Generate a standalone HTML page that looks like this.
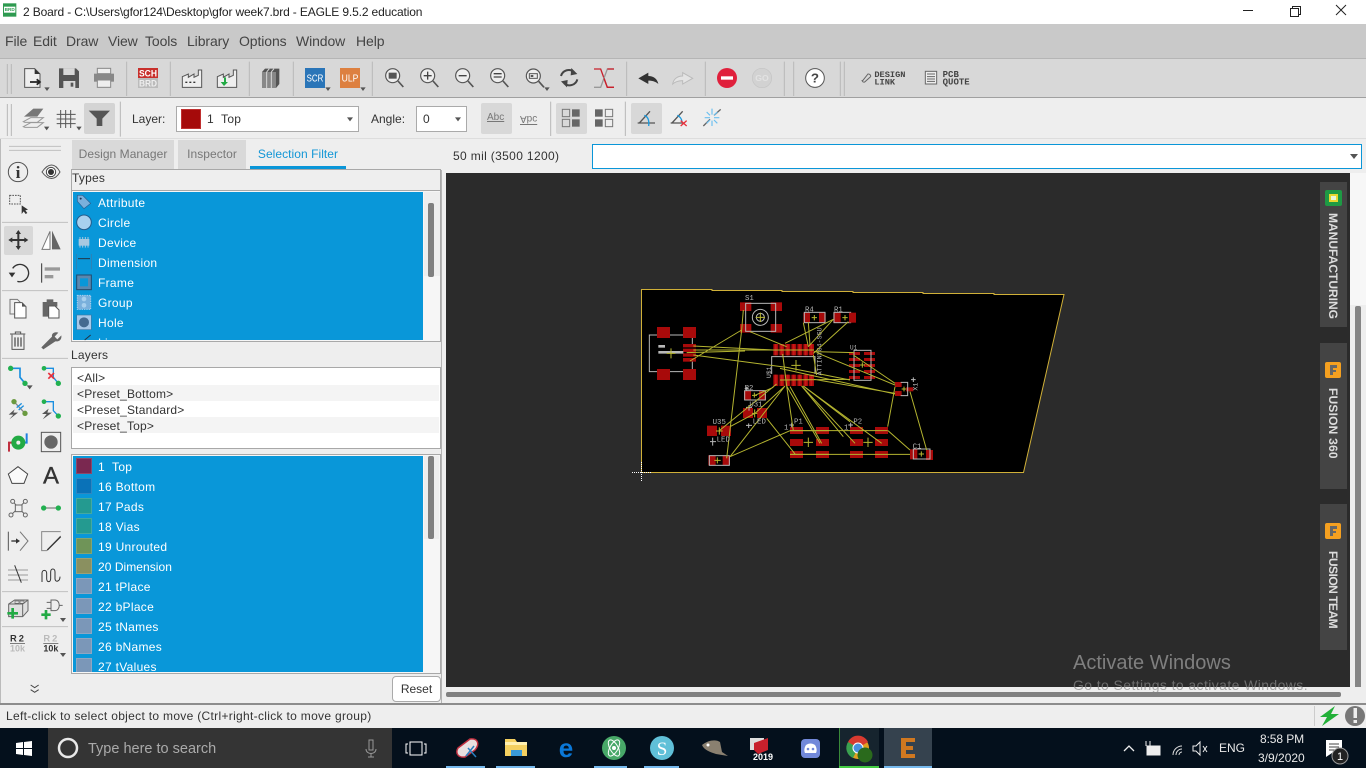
<!DOCTYPE html>
<html><head><meta charset="utf-8"><title>2 Board - EAGLE</title>
<style>
html,body{margin:0;padding:0;width:1366px;height:768px;overflow:hidden;background:#eee}
body{position:relative;font-family:"Liberation Sans",sans-serif;font-size:12px;color:#333}
.a{position:absolute;box-sizing:border-box}
.t{position:absolute;white-space:pre;line-height:16px}
.m{font-size:14px;color:#444;top:33px;letter-spacing:-.1px}
.tab{top:140px;height:29px;line-height:28px;text-align:center;color:#777;background:#d9d9d9;letter-spacing:.05px}
.row{position:absolute;left:98px;color:#fff;white-space:pre;line-height:16px;letter-spacing:.3px}
.lay{position:absolute;left:77px;color:#333;white-space:pre;line-height:16px;letter-spacing:.2px}
.sw{position:absolute;left:76px;width:16px;height:16px;box-sizing:border-box;border:1px solid rgba(255,255,255,.15)}
.vt{position:absolute;writing-mode:vertical-rl;font-family:"Liberation Sans",sans-serif;font-weight:bold;font-size:12px;color:#ddd;left:1326px;line-height:14px;white-space:pre}
svg{position:absolute;left:0;top:0}
</style></head><body>

<!-- title bar -->
<div class="a" style="left:0;top:0;width:1366px;height:24px;background:#fff"></div>
<div class="t" style="left:23px;top:4px;color:#222;letter-spacing:-.14px">2 Board - C:\Users\gfor124\Desktop\gfor week7.brd - EAGLE 9.5.2 education</div>
<!-- menu -->
<div class="a" style="left:0;top:24px;width:1366px;height:35px;background:#c9c9c9"></div>
<div class="t m" style="left:5px">File</div><div class="t m" style="left:33px">Edit</div><div class="t m" style="left:66px">Draw</div><div class="t m" style="left:108px">View</div><div class="t m" style="left:145px">Tools</div><div class="t m" style="left:187px">Library</div><div class="t m" style="left:239px">Options</div><div class="t m" style="left:296px">Window</div><div class="t m" style="left:356px">Help</div>
<!-- toolbars -->
<div class="a" style="left:0;top:58px;width:1366px;height:40px;background:#d8d8d8;border-top:1px solid #b5b5b5;border-bottom:1px solid #a0a0a0"></div>
<div class="a" style="left:0;top:98px;width:1366px;height:41px;background:#eee;border-bottom:1px solid #ddd"></div>
<div class="a" style="left:84px;top:103px;width:31px;height:31px;background:#d4d4d4;border-radius:2px"></div>
<div class="t" style="left:132px;top:111px">Layer:</div>
<div class="a" style="left:176px;top:106px;width:183px;height:26px;background:#fff;border:1px solid #aaa"></div>
<div class="a" style="left:181px;top:109px;width:20px;height:20px;background:#a50a0a;border:1px solid #c03030"></div>
<div class="t" style="left:207px;top:111px;letter-spacing:.3px">1  Top</div>
<div class="t" style="left:371px;top:111px">Angle:</div>
<div class="a" style="left:416px;top:106px;width:51px;height:26px;background:#fff;border:1px solid #aaa"></div>
<div class="t" style="left:423px;top:111px">0</div>
<div class="a" style="left:481px;top:103px;width:31px;height:31px;background:#d8d8d8;border-radius:2px"></div>
<div class="t" style="left:487px;top:110px;font-size:10px;color:#777;text-decoration:underline">Abc</div>
<div class="t" style="left:520px;top:110px;font-size:10px;color:#777;text-decoration:overline;transform:scaleY(-1);transform-origin:50% 50%">Abc</div>
<div class="a" style="left:556px;top:103px;width:31px;height:31px;background:#d8d8d8;border-radius:2px"></div>
<div class="a" style="left:631px;top:103px;width:31px;height:31px;background:#d8d8d8;border-radius:2px"></div>

<!-- left tools -->
<div class="a" style="left:0;top:139px;width:69px;height:564px;background:#eee;border-left:1px solid #bbb"></div>

<!-- right panel -->
<div class="a" style="left:71px;top:139px;width:371px;height:564px;background:#eee"></div>
<div class="a" style="left:441px;top:170px;width:1px;height:533px;background:#b4b4b4"></div>
<div class="a tab" style="left:72px;width:102px">Design Manager</div>
<div class="a tab" style="left:178px;width:68px">Inspector</div>
<div class="a tab" style="left:250px;width:96px;color:#1296d6;background:#eee;border-bottom:3px solid #0a96d8">Selection Filter</div>

<div class="a" style="left:71px;top:169px;width:370px;height:22px;border:1px solid #a8a8a8;background:#eee"></div>
<div class="t" style="left:72px;top:170px;letter-spacing:.2px">Types</div>
<div class="a" style="left:71px;top:190px;width:370px;height:152px;background:#f6f6f6;border:1px solid #a8a8a8;overflow:hidden">
  <div class="a" style="left:1px;top:1px;width:350px;height:148px;background:#0997d9;overflow:hidden">
    <div class="row" style="left:25px;top:3px">Attribute</div><div class="row" style="left:25px;top:23px">Circle</div><div class="row" style="left:25px;top:43px">Device</div><div class="row" style="left:25px;top:63px">Dimension</div><div class="row" style="left:25px;top:83px">Frame</div><div class="row" style="left:25px;top:103px">Group</div><div class="row" style="left:25px;top:123px">Hole</div><div class="row" style="left:25px;top:143px">Line</div>
  </div>
  <div class="a" style="left:352px;top:1px;width:16px;height:84px;background:#eee"></div>
  <div class="a" style="left:356px;top:12px;width:6px;height:74px;background:#808080;border-radius:2px"></div>
</div>
<div class="a" style="left:71px;top:342px;width:370px;height:26px;border-bottom:1px solid #a0a0a0;background:#eee"></div>
<div class="t" style="left:71px;top:347px;letter-spacing:.2px">Layers</div>
<div class="a" style="left:71px;top:367px;width:370px;height:82px;background:#fff;border:1px solid #a8a8a8"></div>
<div class="a" style="left:73px;top:385px;width:366px;height:16px;background:#f4f4f4"></div>
<div class="a" style="left:73px;top:417px;width:366px;height:16px;background:#f4f4f4"></div>
<div class="lay" style="top:370px">&lt;All&gt;</div><div class="lay" style="top:386px">&lt;Preset_Bottom&gt;</div><div class="lay" style="top:402px">&lt;Preset_Standard&gt;</div><div class="lay" style="top:418px">&lt;Preset_Top&gt;</div>

<div class="a" style="left:71px;top:454px;width:370px;height:220px;background:#f6f6f6;border:1px solid #a8a8a8"></div>
<div class="a" style="left:73px;top:456px;width:350px;height:216px;background:#0997d9;overflow:hidden" id="lyr">
  <div class="sw" style="left:3px;top:2px;background:#7a2850"></div><div class="sw" style="left:3px;top:22px;background:#0a72b8"></div><div class="sw" style="left:3px;top:42px;background:#249a90"></div><div class="sw" style="left:3px;top:62px;background:#249a90"></div><div class="sw" style="left:3px;top:82px;background:#6f9458"></div><div class="sw" style="left:3px;top:102px;background:#8a9060"></div><div class="sw" style="left:3px;top:122px;background:#7b97b8"></div><div class="sw" style="left:3px;top:142px;background:#7b97b8"></div><div class="sw" style="left:3px;top:162px;background:#7b97b8"></div><div class="sw" style="left:3px;top:182px;background:#7b97b8"></div><div class="sw" style="left:3px;top:202px;background:#7b97b8"></div>
  <div class="row" style="left:25px;top:3px">1  Top</div><div class="row" style="left:25px;top:23px">16 Bottom</div><div class="row" style="left:25px;top:43px">17 Pads</div><div class="row" style="left:25px;top:63px">18 Vias</div><div class="row" style="left:25px;top:83px">19 Unrouted</div><div class="row" style="left:25px;top:103px;letter-spacing:.05px">20 Dimension</div><div class="row" style="left:25px;top:123px">21 tPlace</div><div class="row" style="left:25px;top:143px">22 bPlace</div><div class="row" style="left:25px;top:163px">25 tNames</div><div class="row" style="left:25px;top:183px">26 bNames</div><div class="row" style="left:25px;top:203px">27 tValues</div>
</div>
<div class="a" style="left:424px;top:456px;width:15px;height:83px;background:#eee"></div>
<div class="a" style="left:428px;top:456px;width:6px;height:83px;background:#808080;border-radius:2px"></div>
<div class="a" style="left:392px;top:676px;width:49px;height:26px;background:#fff;border:1px solid #aaa;border-radius:4px;text-align:center;line-height:25px">Reset</div>

<!-- coord bar -->
<div class="t" style="left:453px;top:148px;letter-spacing:.35px">50 mil (3500 1200)</div>
<div class="a" style="left:592px;top:144px;width:770px;height:25px;background:#fff;border:1px solid #0a96d8"></div>

<!-- canvas -->
<div class="a" style="left:446px;top:173px;width:904px;height:514px;background:#2b2b2b"></div>
<div class="a" style="left:1350px;top:173px;width:16px;height:132px;background:#f7f7f7"></div>
<div class="a" style="left:1355px;top:306px;width:6px;height:381px;background:#858585;border-radius:2px 2px 0 0"></div>
<div class="a" style="left:446px;top:692px;width:895px;height:5px;background:#808080;border-radius:2px"></div>

<!-- side tabs -->
<div class="a" style="left:1320px;top:182px;width:27px;height:145px;background:#444"></div>
<div class="a" style="left:1320px;top:343px;width:27px;height:146px;background:#444"></div>
<div class="a" style="left:1320px;top:504px;width:27px;height:146px;background:#444"></div>
<div class="vt" style="top:213px">MANUFACTURING</div>
<div class="vt" style="top:388px;letter-spacing:.2px">FUSION 360</div>
<div class="vt" style="top:551px;letter-spacing:-.5px">FUSION TEAM</div>

<div class="t" style="left:1073px;top:652px;font-size:20px;line-height:22px;color:#7f7f7f">Activate Windows</div>
<div class="a" style="left:1073px;top:677px;width:240px;height:10px;overflow:hidden"><div class="t" style="left:0;top:0;font-size:14px;letter-spacing:.4px;color:#6d6d6d">Go to Settings to activate Windows.</div></div>
<div class="a" style="left:1073px;top:687px;width:240px;height:5px;overflow:hidden"><div class="t" style="left:0;top:-10px;font-size:14px;letter-spacing:.4px;color:#aaa">Go to Settings to activate Windows.</div></div>

<!-- status -->
<div class="a" style="left:0;top:703px;width:1366px;height:25px;background:#eee;border-top:2px solid #8c8c8c"></div>
<div class="t" style="left:6px;top:708px;letter-spacing:.31px">Left-click to select object to move (Ctrl+right-click to move group)</div>
<div class="a" style="left:1314px;top:706px;width:1px;height:20px;background:#ccc"></div>

<!-- taskbar -->
<div class="a" style="left:0;top:728px;width:1366px;height:40px;background:#04101c"></div>
<div class="a" style="left:48px;top:728px;width:344px;height:40px;background:#343434"></div>
<div class="a" style="left:839px;top:728px;width:40px;height:40px;background:#16242e;border-left:1px solid #3a8a3a"></div>
<div class="a" style="left:884px;top:728px;width:48px;height:40px;background:#35424e"></div>
<div class="a" style="left:446px;top:766px;width:39px;height:2px;background:#76b9ed"></div>
<div class="a" style="left:496px;top:766px;width:39px;height:2px;background:#76b9ed"></div>
<div class="a" style="left:594px;top:766px;width:33px;height:2px;background:#76b9ed"></div>
<div class="a" style="left:644px;top:766px;width:35px;height:2px;background:#76b9ed"></div>
<div class="a" style="left:839px;top:766px;width:40px;height:2px;background:#44cc44"></div>
<div class="a" style="left:884px;top:766px;width:48px;height:2px;background:#76b9ed"></div>
<div class="t" style="left:88px;top:741px;font-size:14.5px;line-height:17px;color:#aaa">Type here to search</div>
<div class="t" style="left:1219px;top:740px;font-size:12px;color:#e8e8e8">ENG</div>
<div class="t" style="left:1260px;top:731px;font-size:12px;letter-spacing:-.1px;color:#e8e8e8">8:58 PM</div>
<div class="t" style="left:1258px;top:750px;font-size:12px;color:#e8e8e8">3/9/2020</div>

<svg width="1366" height="768" viewBox="0 0 1366 768" fill="none">
<!-- window controls -->
<path d="M1243 10.5H1253" stroke="#222"/>
<path d="M1290.5 11.5h8v8h-8zM1292.5 11.5v-2h8v8h-2" stroke="#222" transform="translate(0,-3)"/>
<path d="M1336 5L1346 15M1346 5L1336 15" stroke="#222"/>

<!-- toolbar dividers + icons, zoom-1 coords -->
<g transform="scale(.33333)">
 <rect x="9" y="10" width="40" height="40" fill="#2e9a50"/><rect x="12" y="20" width="34" height="18" fill="#fff"/>
 <text x="29" y="33" font-size="14" font-family="Liberation Sans" font-weight="bold" fill="#2e9a50" text-anchor="middle">BRD</text>
 <path d="M22 192V282M34 192V282M380 185V288M511 185V288M748 185V288M880 185V288M1117 185V288M22 312V408M34 312V408M361 305V410" stroke="#b8b8b8" stroke-width="3"/>
 <!-- new -->
 <path d="M74 206H104L120 222V262H74Z" fill="#eee" stroke="#555" stroke-width="3"/><path d="M104 206V222H120" fill="#333"/><path d="M90 246H118M110 238L120 246L110 254" stroke="#222" stroke-width="5"/>
 <path d="M133 262H149L141 273Z" fill="#555"/>
 <!-- save -->
 <path d="M177 205H228L237 214V264H177Z" fill="#555"/><rect x="190" y="205" width="34" height="20" fill="#d8d8d8"/><rect x="190" y="243" width="36" height="21" fill="#d8d8d8"/><rect x="212" y="248" width="8" height="12" fill="#555"/>
 <!-- print -->
 <rect x="292" y="205" width="40" height="16" fill="#eee" stroke="#888" stroke-width="3"/><rect x="282" y="221" width="60" height="24" fill="#888"/><rect x="292" y="240" width="40" height="22" fill="#eee" stroke="#888" stroke-width="3"/>
 <!-- sch brd -->
 <rect x="414" y="204" width="60" height="30" fill="#c8302c"/><rect x="414" y="234" width="60" height="30" fill="#bbb"/>
 <text x="444" y="230" font-size="28" font-family="Liberation Sans" font-weight="bold" fill="#fff" text-anchor="middle" textLength="54" lengthAdjust="spacingAndGlyphs">SCH</text>
 <text x="444" y="260" font-size="28" font-family="Liberation Sans" font-weight="bold" fill="#eee" text-anchor="middle" textLength="54" lengthAdjust="spacingAndGlyphs">BRD</text>
 <!-- factories -->
 <path d="M547 262V230L565 222V232L582 222V232L595 226V210H605V262Z" fill="#eee" stroke="#555" stroke-width="3"/><path d="M556 247H562M568 247H574M580 247H586" stroke="#333" stroke-width="4"/>
 <path d="M652 262V230L670 222V232L687 222V232L700 226V210H710V262Z" fill="#eee" stroke="#555" stroke-width="3"/><path d="M672 232V246H662L672 258L684 246H678V232Z" fill="#22aa44"/>
 <!-- books -->
 <path d="M786 216L795 206H838V252L828 264H786Z" fill="#555"/><path d="M786 216H828V264H786Z" fill="#888"/><path d="M800 216V264M814 216V264" stroke="#d8d8d8" stroke-width="3"/><path d="M800 216L808 206M814 216L822 206" stroke="#d8d8d8" stroke-width="3"/>
 <!-- scr / ulp -->
 <rect x="915" y="204" width="60" height="60" fill="#2a75b8"/><rect x="1020" y="204" width="60" height="60" fill="#dd8040"/>
 <text x="945" y="245" font-size="31" font-family="Liberation Sans" fill="#fff" text-anchor="middle" textLength="50" lengthAdjust="spacingAndGlyphs">SCR</text>
 <text x="1050" y="245" font-size="31" font-family="Liberation Sans" fill="#fff" text-anchor="middle" textLength="50" lengthAdjust="spacingAndGlyphs">ULP</text>
 <path d="M976 262H992L984 273ZM1081 262H1097L1089 273Z" fill="#555"/>
 <!-- zooms -->
 <g stroke="#555" stroke-width="3.5" fill="#eee">
  <circle cx="1178" cy="227" r="21"/><circle cx="1283" cy="227" r="21"/><circle cx="1388" cy="227" r="21"/><circle cx="1493" cy="227" r="21"/>
  <path d="M1194 243L1210 261M1299 243L1315 261M1404 243L1420 261M1509 243L1525 261" stroke-width="5"/>
 </g>
 <rect x="1166" y="218" width="24" height="18" fill="#555"/>
 <path d="M1271 227H1295M1283 215V239M1376 227H1400M1481 221H1505M1481 231H1505" stroke="#444" stroke-width="4"/>
</g>
<g transform="translate(500,50) scale(.33333)">
 <g stroke="#555" stroke-width="3.5" fill="#eee"><circle cx="100" cy="78" r="21"/><path d="M116 94L132 112" stroke-width="5"/></g>
 <rect x="88" y="71" width="24" height="14" fill="#eee" stroke="#555" stroke-width="3"/><rect x="92" y="75" width="8" height="6" fill="#555"/>
 <path d="M133 112H149L141 123Z" fill="#555"/>
 <path d="M183 78A24 24 0 0 1 222 66M232 88A24 24 0 0 1 193 100" stroke="#444" stroke-width="6"/><path d="M214 54L232 72L212 76ZM201 112L183 94L203 90Z" fill="#444"/>
 <path d="M282 57H302L322 112H342" stroke="#c8202c" stroke-width="4"/><path d="M342 57H322L302 112H282" stroke="#999" stroke-width="4"/><path d="M322 57H342" stroke="#c8202c" stroke-width="4"/><path d="M312 85L322 112H342" stroke="#c8202c" stroke-width="4"/>
 <path d="M380 35V138M616 35V138M853 35V138M881 35V138M1021 35V138M1033 35V138M152 155V258M376 155V258" stroke="#b8b8b8" stroke-width="3"/>
 <path d="M415 85L445 68V78C460 78 472 86 475 102C465 94 456 92 445 92V102Z" fill="#333"/>
 <path d="M578 85L548 68V78C533 78 521 86 518 102C528 94 537 92 548 92V102Z" fill="#e4e4e4" stroke="#bbb" stroke-width="3"/>
 <circle cx="681" cy="84" r="30" fill="#e0203c"/><rect x="663" y="79" width="36" height="10" fill="#fff"/>
 <circle cx="786" cy="84" r="29" fill="#d2d2d2" stroke="#c4c4c4" stroke-width="2"/><text x="786" y="93" font-size="26" font-family="Liberation Sans" font-weight="bold" fill="#e2e2e2" text-anchor="middle">GO</text>
 <circle cx="945" cy="84" r="28" fill="#fff" stroke="#555" stroke-width="3"/><text x="945" y="98" font-size="40" font-family="Liberation Sans" font-weight="bold" fill="#444" text-anchor="middle">?</text>
 <path d="M1088 92L1104 72A7 7 0 0 1 1112 80L1094 96A6 6 0 0 1 1086 90" stroke="#666" stroke-width="3"/>
 <rect x="1276" y="64" width="34" height="38" fill="#eee" stroke="#666" stroke-width="3"/><path d="M1281 72H1305M1281 80H1305M1281 87H1305M1281 94H1305" stroke="#666" stroke-width="3"/>
 <text x="1123" y="81" font-size="26" font-family="Liberation Mono" font-weight="bold" fill="#444">DESIGN</text><text x="1123" y="103" font-size="26" font-family="Liberation Mono" font-weight="bold" fill="#444">LINK</text>
 <text x="1328" y="81" font-size="27" font-family="Liberation Mono" font-weight="bold" fill="#444">PCB</text><text x="1328" y="103" font-size="27" font-family="Liberation Mono" font-weight="bold" fill="#444">QUOTE</text>
 <!-- toolbar 2 right -->
 <rect x="187" y="178" width="22" height="22" stroke="#777" stroke-width="3"/><rect x="216" y="178" width="23" height="22" fill="#666"/><rect x="187" y="208" width="22" height="22" stroke="#777" stroke-width="3"/><rect x="216" y="208" width="23" height="22" fill="#666"/>
 <rect x="285" y="178" width="23" height="22" fill="#666"/><rect x="316" y="178" width="22" height="22" stroke="#777" stroke-width="3"/><rect x="285" y="208" width="23" height="22" fill="#666"/><rect x="316" y="208" width="22" height="22" stroke="#777" stroke-width="3"/>
 <path d="M413 219H465M418 219L450 184" stroke="#555" stroke-width="4"/><path d="M433 196C444 200 448 212 446 228" stroke="#1a9be0" stroke-width="4"/>
 <path d="M512 219H550M516 219L548 184" stroke="#555" stroke-width="4"/><path d="M532 196C540 200 545 208 546 215" stroke="#1a9be0" stroke-width="4"/><path d="M542 212L560 228M560 212L542 228" stroke="#e8303c" stroke-width="4"/>
 <path d="M610 228L630 208M642 196L662 178" stroke="#666" stroke-width="4"/><path d="M636 176V194M636 212V228M614 203H630M642 203H658M620 186L630 196M652 186L642 196M620 220L630 210M652 220L642 210" stroke="#6cc0f0" stroke-width="3.5"/>
</g>
<!-- toolbar 2 left icons -->
<g transform="scale(.33333)">
 <path d="M70 380L92 368H130L112 382H75Z" fill="#eee" stroke="#999" stroke-width="3"/><path d="M70 365L92 353H130L112 367H75Z" fill="#eee" stroke="#999" stroke-width="3"/><path d="M72 350L100 326H130L112 350Z" fill="#777"/>
 <path d="M132 380H148L140 391ZM229 380H245L237 391Z" fill="#555"/>
 <path d="M170 343H227M170 357H227M170 371H227M182 330V384M197 330V384M212 330V384" stroke="#555" stroke-width="3"/>
 <path d="M266 332H330L307 356V378H290V356Z" fill="#555"/>
 <path d="M1041 352H1059L1050 364ZM1365 352H1383L1374 364Z" fill="#555"/>
</g>
<path d="M1350 154H1358L1354 159Z" fill="#555"/>

<!-- left tool icons: zoom3 -->
<g transform="translate(0,140) scale(.33333)">
 <path d="M27 19H183M27 31H183M6 247H204M6 452H204M6 655H204" stroke="#c0c0c0" stroke-width="3"/>
 <circle cx="54" cy="96" r="29" stroke="#555" stroke-width="3"/><text x="54" y="114" font-size="52" font-weight="bold" font-family="Liberation Serif" fill="#333" text-anchor="middle">i</text>
 <path d="M126 96C145 68 165 68 180 96C165 122 145 122 126 96Z" stroke="#555" stroke-width="3"/><circle cx="153" cy="96" r="14" fill="#fff" stroke="#444" stroke-width="3"/><circle cx="153" cy="96" r="9" fill="#333"/>
 <rect x="29" y="166" width="32" height="26" stroke="#555" stroke-width="3" stroke-dasharray="5 3"/><path d="M65 196V222L71 214L77 222L82 219L76 211L84 209Z" fill="#333"/>
 <rect x="12" y="258" width="87" height="87" rx="6" fill="#d8d8d8"/>
 <path d="M55 274V326M29 300H81" stroke="#333" stroke-width="6"/><path d="M55 270L47 282H63ZM55 330L47 318H63ZM25 300L37 292V308ZM85 300L73 292V308Z" fill="#333"/>
 <path d="M150 274V328H126Z" fill="#fff" stroke="#777" stroke-width="3"/><path d="M156 272V328H182Z" fill="#666"/>
 <path d="M38 385A26 26 0 1 1 52 424" stroke="#333" stroke-width="4"/><path d="M26 398H46L36 412Z" fill="#333"/>
 <path d="M125 370V428" stroke="#333" stroke-width="3"/><rect x="134" y="382" width="46" height="10" fill="#999"/><rect x="134" y="405" width="26" height="10" fill="#999"/>
 <path d="M30 478H52L62 488V522H30Z" fill="#eee" stroke="#777" stroke-width="3"/><path d="M44 488H66L78 500V534H44Z" fill="#fff" stroke="#555" stroke-width="3"/><path d="M66 488V500H78Z" fill="#555"/>
 <path d="M128 486H140V478H160V486H172V500H155V530H128Z" fill="#666"/><path d="M146 498H165L177 510V534H146Z" fill="#fff" stroke="#555" stroke-width="3"/>
 <path d="M30 582H76M46 582V576H62V582M36 584V628H72V584" stroke="#555" stroke-width="3"/><path d="M45 592V620M54 592V620M63 592V620" stroke="#555" stroke-width="4"/>
 <path d="M130 628L124 622L156 590C154 580 164 574 175 578L164 590L172 598L184 586C186 598 178 606 166 604Z" fill="#666"/>
 <path d="M32 685H60V712L75 730" stroke="#1a8fe0" stroke-width="5"/><circle cx="32" cy="685" r="8" fill="#22b050"/><circle cx="75" cy="730" r="8" fill="#22b050"/><path d="M80 736H98L89 748Z" fill="#555"/>
 <path d="M132 685H160V712L175 730" stroke="#1a8fe0" stroke-width="4"/><circle cx="132" cy="685" r="7" fill="#22b050"/><circle cx="175" cy="730" r="8" fill="#22b050"/><path d="M145 699L162 716M162 699L145 716" stroke="#e8303c" stroke-width="5"/>
 <path d="M42 785L75 820" stroke="#888" stroke-width="4"/><path d="M50 803L65 790M56 810L71 797" stroke="#1a8fe0" stroke-width="4"/><circle cx="42" cy="785" r="8" fill="#6a9a40"/><circle cx="75" cy="820" r="8" fill="#6a9a40"/>
 <path d="M44 808L26 824H40L28 838L54 818H40Z" fill="#555"/>
 <path d="M132 785H160V812L175 828" stroke="#1a8fe0" stroke-width="4"/><circle cx="132" cy="785" r="7" fill="#22b050"/><circle cx="175" cy="828" r="8" fill="#22b050"/><path d="M146 806L126 822H140L128 838L156 818H142Z" fill="#555"/>
</g>
<!-- zoom4 -->
<g transform="translate(0,420) scale(.33333)">
 <path d="M27 95V68H38" stroke="#c03040" stroke-width="6"/><path d="M62 68H80V40" stroke="#2080e0" stroke-width="6"/><circle cx="55" cy="68" r="21" fill="#22aa44"/><circle cx="55" cy="68" r="6" fill="#eee"/>
 <rect x="124" y="37" width="58" height="58" stroke="#555" stroke-width="3"/><circle cx="153" cy="66" r="20" fill="#666"/>
 <path d="M54 140L83 162L72 190H36L25 162Z" fill="#fafafa" stroke="#444" stroke-width="3"/>
 <text x="153" y="191" font-size="72" font-family="Liberation Sans" fill="#333" stroke="#333" stroke-width="1" text-anchor="middle">A</text>
 <path d="M38 244L76 285M76 244L33 285" stroke="#666" stroke-width="3"/><rect x="46" y="255" width="20" height="20" fill="#eee" stroke="#666" stroke-width="3"/><g fill="#eee" stroke="#666" stroke-width="3"><circle cx="38" cy="244" r="6"/><circle cx="76" cy="244" r="6"/><circle cx="33" cy="285" r="6"/><circle cx="76" cy="285" r="6"/></g>
 <path d="M131 264H175" stroke="#888" stroke-width="4"/><circle cx="131" cy="264" r="8" fill="#22b050"/><circle cx="175" cy="264" r="8" fill="#22b050"/>
 <path d="M25 335V392" stroke="#555" stroke-width="3"/><path d="M34 363H52" stroke="#333" stroke-width="4"/><path d="M48 355L60 363L48 371Z" fill="#333"/><path d="M60 335L84 363L60 392" stroke="#777" stroke-width="3"/>
 <path d="M182 335H125V392H140L182 348" stroke="#888" stroke-width="3"/><path d="M142 390L182 350" stroke="#333" stroke-width="4"/>
 <path d="M24 450H84M24 465H84M24 480H84" stroke="#aaa" stroke-width="4"/><path d="M44 436L64 488" stroke="#333" stroke-width="3"/>
 <path d="M126 486V460C126 448 140 448 140 460V476C140 488 152 488 152 476V456C152 444 165 444 165 456V476C165 488 180 486 180 470" stroke="#333" stroke-width="3"/>
 <path d="M6 515H204M6 620H204" stroke="#c0c0c0" stroke-width="3"/>
 <path d="M26 552L44 540H84V572L68 590H26Z" fill="#e0e0e0" stroke="#666" stroke-width="3"/><path d="M26 552H68V590M68 552L84 540" stroke="#666" stroke-width="3"/><rect x="45" y="543" width="12" height="7" stroke="#666" stroke-width="2"/><rect x="60" y="543" width="12" height="7" stroke="#666" stroke-width="2"/>
 <path d="M38 564V596M22 580H54" stroke="#22aa44" stroke-width="8"/>
 <path d="M153 540H165C182 540 182 572 165 572H153Z" fill="#eee" stroke="#666" stroke-width="3"/><path d="M140 547H153M140 565H153M178 556H188" stroke="#666" stroke-width="3"/>
 <path d="M138 570V598M124 584H152" stroke="#22aa44" stroke-width="8"/><path d="M180 594H198L189 606Z" fill="#555"/>
 <text x="30" y="665" font-size="28" font-weight="bold" font-family="Liberation Sans" fill="#333" textLength="42">R2</text><path d="M30 670H75" stroke="#444" stroke-width="2"/><text x="30" y="695" font-size="27" font-weight="bold" font-family="Liberation Sans" fill="#bbb">10k</text>
 <text x="130" y="665" font-size="28" font-weight="bold" font-family="Liberation Sans" fill="#bbb" textLength="42">R2</text><path d="M130 670H175" stroke="#444" stroke-width="2"/><text x="130" y="695" font-size="27" font-weight="bold" font-family="Liberation Sans" fill="#333">10k</text>
 <path d="M180 699H198L189 711Z" fill="#555"/>
 <path d="M92 795L104 803L116 795M92 809L104 817L116 809" stroke="#444" stroke-width="3"/>
</g>

<!-- type icons -->
<g transform="translate(70,140) scale(.33333)">
 <path d="M22 166H38L62 190L42 206L22 184Z" fill="#7ab0dc" stroke="#2a6090" stroke-width="2"/><circle cx="32" cy="176" r="3" fill="#235"/>
 <circle cx="42" cy="247" r="22" fill="#a8d0ee" stroke="#245c8c" stroke-width="3"/>
 <rect x="26" y="297" width="32" height="20" fill="#a8c8e0"/><path d="M30 291V323M38 291V323M46 291V323M54 291V323" stroke="#a8c8e0" stroke-width="3"/>
 <path d="M20 342V388M64 342V388" stroke="#3a7aa8" stroke-width="2"/><path d="M24 356H60" stroke="#234" stroke-width="3"/>
 <rect x="20" y="405" width="44" height="44" fill="#5a88b0" stroke="#234a6c" stroke-width="3"/><rect x="30" y="415" width="24" height="24" fill="#0997d9"/>
 <rect x="22" y="466" width="40" height="42" fill="#7ab0dc" stroke="#a8d0ee" stroke-width="3" stroke-dasharray="4 3"/><circle cx="42" cy="477" r="7" fill="#a8d0ee"/><circle cx="42" cy="496" r="7" fill="#a8d0ee"/>
 <rect x="20" y="525" width="44" height="44" fill="#a8c8e8" stroke="#3a7aa8" stroke-width="2"/><circle cx="42" cy="547" r="15" fill="#456a90"/>
 <path d="M44 600L62 585" stroke="#234" stroke-width="3"/>
</g>
<!-- side tab icons -->
<rect x="1325" y="190" width="17" height="16" rx="2" fill="#1e9a44"/><rect x="1329" y="194" width="9" height="8" fill="#e8d830"/><rect x="1331" y="196" width="5" height="4" fill="#e8f8d8"/>
<g><rect x="1325" y="362" width="16" height="16" rx="2" fill="#f5a020"/><path d="M1330 365H1337V368H1333V370H1336V372H1333V375H1330Z" fill="#666"/></g>
<g transform="translate(0,161)"><rect x="1325" y="362" width="16" height="16" rx="2" fill="#f5a020"/><path d="M1330 365H1337V368H1333V370H1336V372H1333V375H1330Z" fill="#666"/></g>

<!-- PCB -->
<path d="M641.5 472.5V289.5H712V290.5H782V291.5H853V292.5H923V293.5H994V294.5H1064L1023.5 472.5Z" fill="#000"/>
<path d="M641.5 472.5V289.5H712V290.5H782V291.5H853V292.5H923V293.5H994V294.5H1064L1023.5 472.5Z" stroke="#d0b038" stroke-width="1"/>
<path d="M641.5 462V482M632 472.5H652" stroke="#fff" stroke-dasharray="1 1"/>

<g transform="translate(630,280) scale(.33333)">
 <g fill="#a80a0a">
  <rect x="81" y="141" width="39" height="33"/><rect x="159" y="141" width="39" height="33"/><rect x="81" y="267" width="39" height="33"/><rect x="159" y="267" width="39" height="33"/>
  <rect x="159" y="192" width="39" height="10"/><rect x="159" y="206" width="39" height="10"/><rect x="159" y="220" width="39" height="10"/><rect x="159" y="234" width="39" height="11"/>
  <rect x="330" y="67" width="34" height="26"/><rect x="422" y="67" width="34" height="26"/><rect x="330" y="132" width="34" height="26"/><rect x="422" y="132" width="34" height="26"/>
  <rect x="430" y="192" width="15" height="34"/><rect x="448" y="192" width="15" height="34"/><rect x="466" y="192" width="15" height="34"/><rect x="484" y="192" width="15" height="34"/><rect x="502" y="192" width="15" height="34"/><rect x="520" y="192" width="15" height="34"/><rect x="537" y="192" width="15" height="34"/>
  <rect x="430" y="284" width="15" height="34"/><rect x="448" y="284" width="15" height="34"/><rect x="466" y="284" width="15" height="34"/><rect x="484" y="284" width="15" height="34"/><rect x="502" y="284" width="15" height="34"/><rect x="520" y="284" width="15" height="34"/><rect x="537" y="284" width="15" height="34"/>
  <rect x="342" y="332" width="21" height="28"/><rect x="387" y="332" width="21" height="28"/>
  <rect x="339" y="384" width="30" height="30"/><rect x="381" y="384" width="30" height="30"/>
  <rect x="231" y="437" width="30" height="31"/><rect x="273" y="437" width="30" height="31"/>
  <rect x="235" y="526" width="22" height="30"/><rect x="278" y="526" width="22" height="30"/>
  <rect x="480" y="441" width="39" height="21"/><rect x="558" y="441" width="39" height="21"/><rect x="480" y="477" width="39" height="21"/><rect x="558" y="477" width="39" height="21"/><rect x="480" y="513" width="39" height="21"/><rect x="558" y="513" width="39" height="21"/>
  <rect x="520" y="98" width="20" height="30"/><rect x="567" y="98" width="20" height="30"/><rect x="610" y="98" width="22" height="30"/>
 </g>
 <g fill="#c81818">
  <rect x="434" y="192" width="6" height="34"/><rect x="452" y="192" width="6" height="34"/><rect x="470" y="192" width="6" height="34"/><rect x="488" y="192" width="6" height="34"/><rect x="506" y="192" width="6" height="34"/><rect x="524" y="192" width="6" height="34"/><rect x="541" y="192" width="6" height="34"/>
  <rect x="434" y="284" width="6" height="34"/><rect x="452" y="284" width="6" height="34"/><rect x="470" y="284" width="6" height="34"/><rect x="488" y="284" width="6" height="34"/><rect x="506" y="284" width="6" height="34"/><rect x="524" y="284" width="6" height="34"/><rect x="541" y="284" width="6" height="34"/>
 </g>
 <g stroke="#b8b8b8" stroke-width="3">
  <path d="M81 165H58V275H81M120 165H159M120 275H159M187 174V192M187 245V267"/>
  <path d="M85 217H160" stroke-width="8"/><path d="M85 199H105" stroke-width="8"/>
  <rect x="347" y="70" width="90" height="84"/><circle cx="391" cy="112" r="24"/><circle cx="391" cy="112" r="12"/>
  <path d="M425 282V230H555V282"/>
  <rect x="344" y="332" width="62" height="28"/><rect x="238" y="527" width="60" height="29"/><rect x="523" y="97" width="62" height="31"/><rect x="612" y="97" width="50" height="31"/>
  <path d="M357 375V392M348 382H366M248 473V497M240 485H258M356 430V444M348 436H366M350 320V332M344 326H356M485 428V442M478 435H492"/>
 </g>
 <g stroke="#b8b830" stroke-width="3">
  <path d="M123 205V235M110 220H136M373 338V353M366 346H381M498 240V272M484 256H512M268 442V464M258 453H278M374 388V412M366 400H382M262 532V550M253 541H272M535 473V501M521 487H549M553 105V121M545 113H561M645 105V121M637 113H653M391 98V126M377 112H405"/>
 </g>
 <g stroke="#b4b430" stroke-width="3">
  <path d="M190 198L430 210M190 210L552 210M170 218L345 213M190 225L470 262L660 300M180 243L335 150M335 150L290 535M360 155L470 200M440 312L268 452M430 322L375 346M465 318L300 530M465 318L375 400M470 318L490 452M470 318L570 490M520 318L660 425M515 318L640 470M300 440L375 400M410 415L495 522M300 530L480 452M480 452H597M480 523H597M458 222L470 318M520 128L535 200M550 225L560 285M610 118L535 200M340 90L335 150"/>
 </g>
 <g fill="#b8b8b8" font-family="Liberation Mono" font-size="22">
  <text x="345" y="60">S1</text><text x="525" y="95">R4</text><text x="612" y="95">R1</text><text x="344" y="330">R2</text><text x="358" y="380">U31</text><text x="248" y="432">U35</text><text x="368" y="430">LED</text><text x="260" y="484">LED</text><text x="492" y="430">P1</text><text x="462" y="448">1</text>
  <text transform="translate(575,286) rotate(-90)" font-size="20">ATTINY84-SSU</text>
  <text transform="translate(423,294) rotate(-90)" font-size="19">U$1</text>
 </g>
</g>
<g transform="translate(780,280) scale(.33333)">
 <g fill="#a80a0a">
  <rect x="210" y="441" width="39" height="21"/><rect x="285" y="441" width="39" height="21"/><rect x="210" y="477" width="39" height="21"/><rect x="285" y="477" width="39" height="21"/><rect x="210" y="513" width="39" height="21"/><rect x="285" y="513" width="39" height="21"/>
  <rect x="390" y="508" width="22" height="30"/><rect x="438" y="510" width="21" height="30"/>
  <rect x="207" y="98" width="21" height="30"/>
  <rect x="207" y="216" width="33" height="9"/><rect x="207" y="234" width="33" height="9"/><rect x="207" y="252" width="33" height="9"/><rect x="207" y="270" width="33" height="9"/><rect x="207" y="288" width="33" height="9"/>
  <rect x="252" y="216" width="33" height="9"/><rect x="252" y="234" width="33" height="9"/><rect x="252" y="252" width="33" height="9"/><rect x="252" y="270" width="33" height="9"/><rect x="252" y="288" width="33" height="9"/>
  <rect x="345" y="306" width="20" height="15"/><rect x="345" y="333" width="20" height="15"/><rect x="378" y="322" width="22" height="12"/>
 </g>
 <g stroke="#b8b8b8" stroke-width="3">
  <rect x="400" y="507" width="50" height="30"/><rect x="222" y="211" width="51" height="90"/>
  <path d="M362 307H383V347H362"/><path d="M212 428V442M205 435H219M400 292V306M393 299H407"/>
 </g>
 <g stroke="#b8b830" stroke-width="3"><path d="M264 473V501M250 487H278M424 514V530M416 522H432M247 247V263M239 255H255M372 320V334M365 327H379"/></g>
 <g stroke="#b4b430" stroke-width="3">
  <path d="M30 452H323M30 523H390M324 452L390 510M345 320L323 440M390 335L440 510M102 298L345 340M102 215L222 218M110 218L345 315M0 265L345 342M85 127L90 195M160 118L15 190M205 125L100 220M220 225L345 310M30 320L125 490M65 318L225 490M70 318L305 490M0 300L210 298"/>
 </g>
 <g fill="#b8b8b8" font-family="Liberation Mono" font-size="22">
  <text x="220" y="430">P2</text><text x="192" y="448">1</text><text x="398" y="505">C1</text><text x="210" y="208" font-size="18">U1</text>
  <text transform="translate(412,332) rotate(-90)" font-size="20">X1</text>
 </g>
</g>

<!-- status right icons -->
<path d="M1335 706L1320 717H1327L1322 726L1339 714H1331Z" fill="#22b038"/>
<circle cx="1355" cy="716" r="10" fill="#777"/><rect x="1353.5" y="708" width="3.5" height="10" fill="#eee"/><rect x="1353.5" y="720" width="3.5" height="3" fill="#eee"/>

<!-- taskbar icons -->
<g fill="#fff"><path d="M16 743L23 742V748H16ZM24 742L32 741V748H24ZM16 749H23V755L16 754ZM24 749H32V756L24 755Z"/></g>
<circle cx="68" cy="748" r="9" stroke="#e8e8e8" stroke-width="2.5"/>
<path d="M369 740H373V750H369ZM366 749C366 755 376 755 376 749M371 754V757M368 757H374" stroke="#999"/>
<path d="M410 742H422V755H410ZM408 744H406V753H408M424 744H426V753H424" stroke="#fff"/>
<path d="M458 748L470 739C478 738 480 744 475 750L465 757C458 758 455 753 458 748Z" fill="#e8e0e0" stroke="#c03040" stroke-width="1.5"/><path d="M468 748L476 757M474 746L466 756" stroke="#2a80c0" stroke-width="1.5"/>
<path d="M505 739H515L517 742H527V756H505Z" fill="#f4d060"/><rect x="511" y="750" width="11" height="6" fill="#3a9ad8"/><rect x="505" y="742" width="22" height="3" fill="#fff0b0"/>
<text x="566" y="757" font-size="26" font-weight="bold" font-family="Liberation Sans" fill="#0a78d8" text-anchor="middle">e</text>
<circle cx="614" cy="748" r="12" fill="#48a868"/><ellipse cx="614" cy="748" rx="9" ry="4" stroke="#fff" transform="rotate(60 614 748)"/><ellipse cx="614" cy="748" rx="9" ry="4" stroke="#fff" transform="rotate(-60 614 748)"/><circle cx="614" cy="748" r="2" fill="#fff"/>
<circle cx="662" cy="748" r="12" fill="#60c0d8"/><text x="662" y="755" font-size="19" font-family="Liberation Serif" fill="#fff" text-anchor="middle">S</text>
<path d="M702 745C708 740 716 739 720 742L722 752L728 756L716 754C710 752 704 750 702 745Z" fill="#8a8070"/><circle cx="708" cy="745" r="1.5" fill="#fff"/>
<rect x="750" y="738" width="14" height="12" fill="#ddd"/><path d="M754 743L768 738V750L758 754L754 750Z" fill="#c8202c"/><text x="763" y="760" font-size="9" font-weight="bold" font-family="Liberation Sans" fill="#fff" text-anchor="middle">2019</text>
<rect x="801" y="739" width="19" height="19" rx="4" fill="#7289da"/><path d="M806 745C809 743 812 743 815 745C817 748 817 751 816 753H805C804 751 804 748 806 745Z" fill="#fff"/><circle cx="808" cy="749" r="1.3" fill="#7289da"/><circle cx="813" cy="749" r="1.3" fill="#7289da"/>
<circle cx="858" cy="748" r="11" fill="#e0a020"/><path d="M858 748L848 742A11 11 0 0 1 868 742Z" fill="#d83a30"/><path d="M858 748L848 742A11 11 0 0 0 853 758Z" fill="#3aa050"/><circle cx="858" cy="748" r="5" fill="#4a90e0" stroke="#fff"/><circle cx="865" cy="755" r="7.5" fill="#2a6a1c"/>
<path d="M901 738H915V742H906V746H913V750H906V754H915V758H901Z" fill="#d07820"/>
<path d="M1124 751L1129 746L1134 751" stroke="#eee" stroke-width="1.3"/>
<rect x="1147" y="746" width="13" height="9" fill="#eee" stroke="#eee"/><path d="M1146 741V746M1150 741V746" stroke="#eee"/>
<path d="M1173 755A9 9 0 0 1 1182 746M1176 755A6 6 0 0 1 1182 749M1179 755A3 3 0 0 1 1182 752" stroke="#ddd"/>
<path d="M1193 746H1196L1200 742V755L1196 751H1193ZM1203 746L1207 752M1207 746L1203 752" stroke="#eee"/>
<path d="M1326 740H1342V753H1332L1326 757Z" fill="#fff"/><path d="M1329 744H1339M1329 747H1339M1329 750H1339" stroke="#444"/>
<circle cx="1340" cy="756" r="8" fill="#222" stroke="#999"/><text x="1340" y="760" font-size="11" font-family="Liberation Sans" fill="#fff" text-anchor="middle">1</text>
</svg>
</body></html>
